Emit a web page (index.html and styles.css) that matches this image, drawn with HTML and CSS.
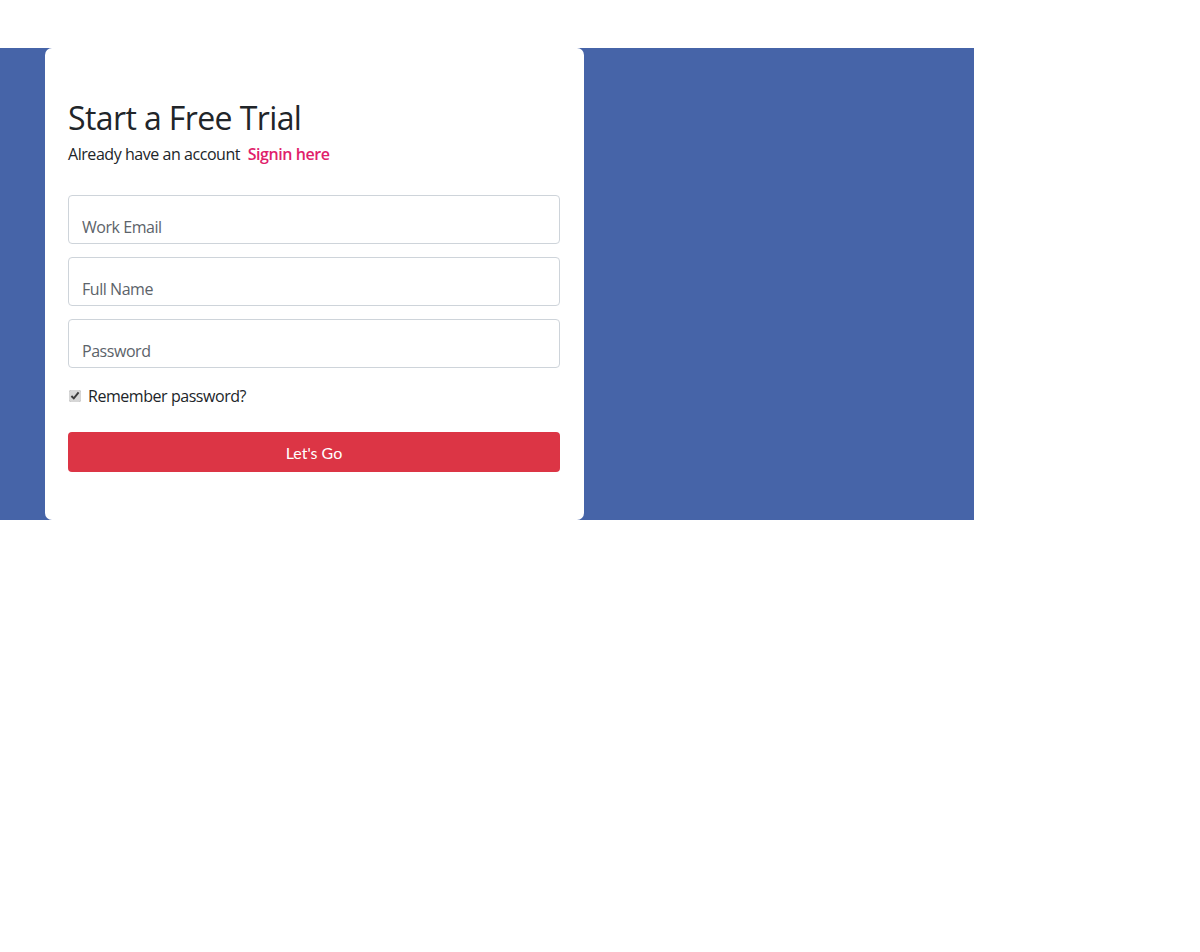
FILE: index.html
```html
<!DOCTYPE html>
<html>
<head>
    <title>Start a Free Trial</title>
    <meta http-equiv="content-type" content="text/html; charset=UTF-8"/>
    <link rel="stylesheet" href="styles.css">
</head>
<body>
    <section class="signup-band">
        <div class="signup-card">
            <h3 class="signup-title">Start a Free Trial</h3>
            <p class="signup-sub">Already have an account <a href="#" class="signin-link">Signin here</a></p>
            <form class="signup-form">
                <div class="field">
                    <input type="email" placeholder="Work Email">
                </div>
                <div class="field">
                    <input type="text" placeholder="Full Name">
                </div>
                <div class="field">
                    <input type="password" placeholder="Password">
                </div>
                <label class="remember">
                    <input type="checkbox" checked>
                    <span>Remember password?</span>
                </label>
                <button type="button" class="btn-go">Let's Go</button>
            </form>
        </div>
    </section>
</body>
</html>
```

FILE: styles.css
```css
html {
    height: 100%;
}

body {
    margin: 0;
    background-color: #fff;
    color: #212529;
    font-family: "Segoe UI", "Open Sans", "Noto Sans", sans-serif;
    font-size: 16px;
    line-height: 1.5;
    letter-spacing: -0.45px;
}

.signup-band {
    margin-top: 48px;
    width: 974px;
    background-color: #4664a8;
}

.signup-card {
    margin-left: 45px;
    width: 539px;
    box-sizing: border-box;
    padding: 51px 24px 48px 23px;
    background-color: #fff;
    border-radius: 7px;
}

.signup-title {
    margin: 0 0 5px 0;
    font-size: 32px;
    font-weight: 500;
    line-height: 1.2;
    letter-spacing: -0.6px;
}

.signup-sub {
    margin: 0 0 29px 0;
}

.signin-link {
    margin-left: 4px;
    color: #e0206a;
    font-weight: 600;
    text-decoration: none;
}

.field {
    margin-bottom: 13px;
}

.field input {
    display: block;
    width: 100%;
    height: 49px;
    box-sizing: border-box;
    padding: 18px 13px 4px 13px;
    border: 1px solid #ced4da;
    border-radius: 4px;
    font: inherit;
    letter-spacing: -0.45px;
    color: #495057;
}

.field input::placeholder {
    color: #5c636a;
}

.remember {
    display: flex;
    align-items: center;
    gap: 7px;
    margin-top: 16px;
}

.remember input {
    margin: 0 0 0 1px;
    width: 12px;
    height: 12px;
    accent-color: #d6d6d6;
}

.btn-go {
    display: block;
    width: 100%;
    height: 40px;
    margin-top: 24px;
    border: none;
    border-radius: 4px;
    background-color: #dc3545;
    color: #fff;
    font-family: Lato, "Open Sans", sans-serif;
    font-size: 16px;
    letter-spacing: 0;
}
```
